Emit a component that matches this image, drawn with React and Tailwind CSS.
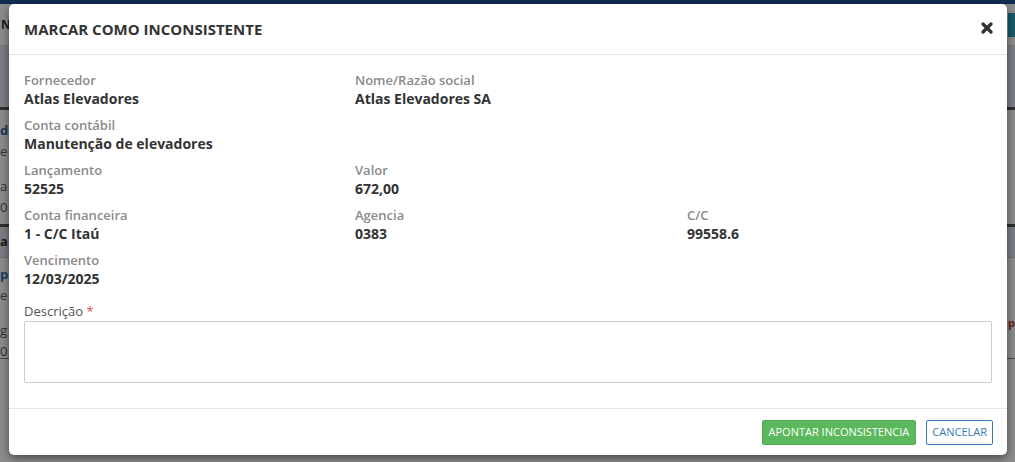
import { X } from 'lucide-react'

function Field({ label, value }) {
  return (
    <div className="mb-[8px]">
      <div className="text-[13px] leading-[18px] font-semibold text-[#8a8a8a]">{label}</div>
      <div className="text-[14px] leading-[19px] font-bold text-[#333]">{value}</div>
    </div>
  )
}

function BackgroundPage() {
  return (
    <div className="flex flex-col h-full text-[13px] text-[#555]">
      <div className="h-[4px] bg-[#1b4f91]" />
      <div className="h-[42px] bg-white border-b border-[#ddd] flex items-center justify-between pl-[1px] pr-0">
        <span className="font-bold text-[12px] text-[#333]">N</span>
        <span className="h-[24px] w-[7px] bg-[#2aa3b8]" />
      </div>
      <div className="h-[61px] bg-[#dfe6f0]" />
      <div className="h-[3px] bg-[#555]" />
      <div className="h-[114px] bg-white flex flex-col pt-[10px] leading-[21px]">
        <span className="font-bold text-[#2f6fb0]">d</span>
        <span>e</span>
        <span className="mt-[14px]">a</span>
        <span>0</span>
      </div>
      <div className="h-[3px] bg-[#555]" />
      <div className="h-[30px] bg-[#dfe6f0] flex items-center font-bold text-[#333]">a</div>
      <div className="h-[1px] bg-[#ccc]" />
      <div className="h-[100px] bg-white flex items-start justify-between pt-[6px] leading-[21px]">
        <div className="flex flex-col">
          <span className="font-bold text-[#2f6fb0]">p</span>
          <span>e</span>
          <span className="mt-[14px]">g</span>
          <span>0</span>
        </div>
        <span className="mt-[48px] font-bold text-[#c0392b] text-[11px]">p</span>
      </div>
      <div className="h-[1px] bg-[#888]" />
      <div className="flex-1 bg-white" />
    </div>
  )
}

export default function App() {
  return (
    <div
      className="relative w-[1015px] h-[462px] overflow-hidden"
      style={{ fontFamily: '"Open Sans", "Liberation Sans", sans-serif' }}
    >
      <BackgroundPage />
      <div className="absolute inset-0 bg-black/45" />

      <div className="absolute left-[9px] top-[4px] w-[998px] h-[451px] bg-white rounded-[5px] shadow-[0_3px_9px_rgba(0,0,0,0.5)] flex flex-col">
        <div className="flex items-center justify-between px-[15px] h-[51px] border-b border-[#e5e5e5]">
          <h4 className="text-[15px] font-bold text-[#333] uppercase leading-[20px]">Marcar como inconsistente</h4>
          <button className="text-[#333] -mt-[2px] -mr-[3px]">
            <X size={16} strokeWidth={5} />
          </button>
        </div>

        <div className="flex-1 px-[15px] pt-[16px]">
          <div className="grid grid-cols-[331px_332px_1fr]">
            <Field label="Fornecedor" value="Atlas Elevadores" />
            <div className="col-span-2">
              <Field label="Nome/Razão social" value="Atlas Elevadores SA" />
            </div>
            <div className="col-span-3">
              <Field label="Conta contábil" value="Manutenção de elevadores" />
            </div>
            <Field label="Lançamento" value="52525" />
            <div className="col-span-2">
              <Field label="Valor" value="672,00" />
            </div>
            <Field label="Conta financeira" value="1 - C/C Itaú" />
            <Field label="Agencia" value="0383" />
            <Field label="C/C" value="99558.6" />
            <div className="col-span-3">
              <Field label="Vencimento" value="12/03/2025" />
            </div>
          </div>

          <div className="mt-[6px]">
            <label className="block text-[13px] leading-[18px] text-[#555] mb-[1px]">
              Descrição <span className="text-[#e74c3c]">*</span>
            </label>
            <textarea className="block w-full h-[62px] border border-[#ccc] rounded-[2px] resize-none outline-none px-[8px] py-[4px] text-[13px]" />
          </div>
        </div>

        <div className="flex justify-end items-center gap-[10px] px-[14px] h-[47px] border-t border-[#e5e5e5]">
          <button className="h-[25px] px-[6px] bg-[#5cb85c] border border-[#4cae4c] rounded-[2px] text-white text-[11px] leading-[16px]">
            APONTAR INCONSISTENCIA
          </button>
          <button className="h-[25px] px-[5px] bg-white border border-[#337ab7] rounded-[2px] text-[#337ab7] text-[11px] leading-[16px]">
            CANCELAR
          </button>
        </div>
      </div>
    </div>
  )
}
